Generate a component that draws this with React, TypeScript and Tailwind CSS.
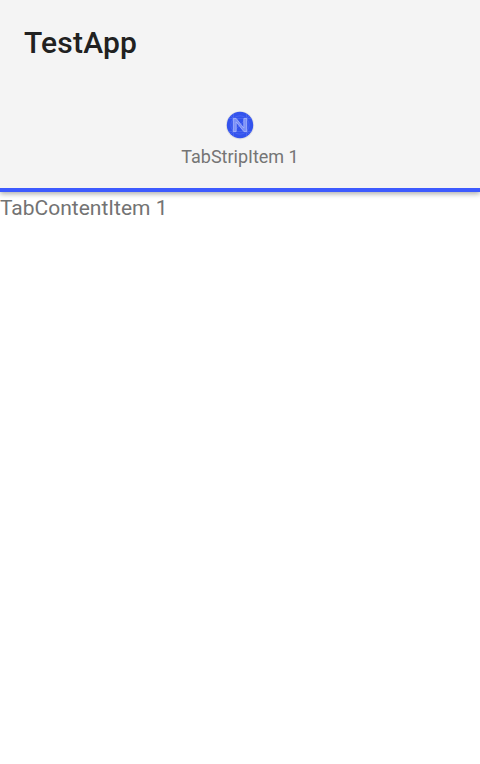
export default function App() {
  return (
    <div className="flex h-[764px] w-[480px] flex-col bg-white font-['Roboto',sans-serif]">
      <header className="flex h-[192px] flex-col bg-[#f4f4f4] shadow-[0_2px_5px_rgba(0,0,0,0.32)]">
        <h1 className="h-[84px] pl-6 text-[30px] leading-[86px] font-medium tracking-[0.2px] text-[#212121]">TestApp</h1>
        <div className="flex flex-1 flex-col items-center border-b-4 border-[#3d5afe] pt-[27px]">
          <svg width="28" height="28" viewBox="0 0 28 28" overflow="visible">
            <circle cx="14" cy="14.3" r="14.1" fill="#e0e0e3" />
            <circle cx="14" cy="14" r="13.2" fill="#3353ed" />
            <g fill="none" stroke="#6f86f6" strokeOpacity="0.5" strokeWidth="0.7">
              <path d="M2 7.5h24M2 20.5h24M7.5 3v22M20.5 3v22M4.8 4.8l18.4 18.4M23.2 4.8L4.8 23.2" />
              <circle cx="14" cy="14" r="9.2" />
            </g>
            <path d="M7.3 20.5V7.5h2.9l7.6 9.6V7.5h2.9v13h-2.9l-7.6-9.6v9.6z" fill="#7b90f7" stroke="#b3bffb" strokeWidth="0.7" strokeLinejoin="round" />
          </svg>
          <span className="mt-[7px] text-[18px] leading-[22px] text-[#757575]">TabStripItem 1</span>
        </div>
      </header>
      <main className="text-[21px] leading-[32px] text-[#737373]">TabContentItem 1</main>
    </div>
  );
}
